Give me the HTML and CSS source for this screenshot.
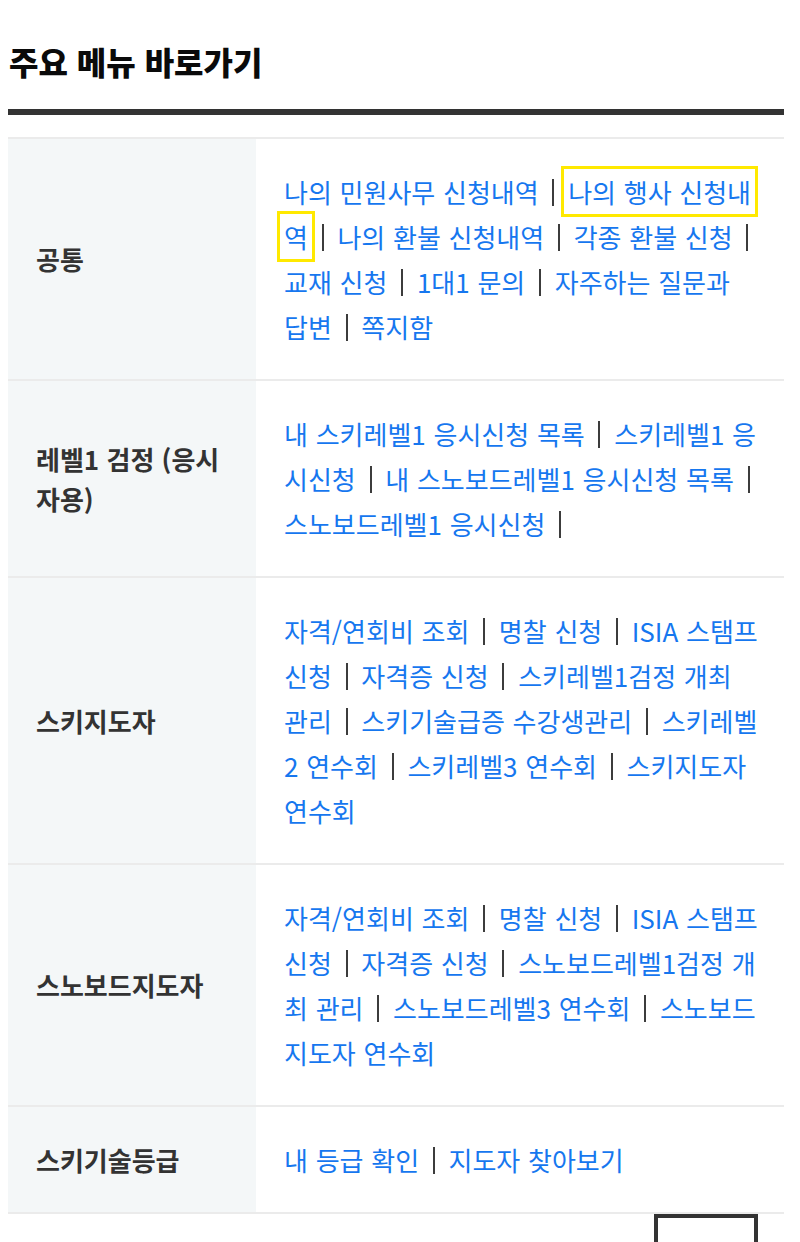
FILE: index.html
```html
<!DOCTYPE html>
<html lang="ko">
<head>
<meta charset="utf-8">
<title>주요 메뉴 바로가기</title>
<link rel="stylesheet" href="styles.css">
</head>
<body>
<div class="wrap">
  <h2 class="title">주요 메뉴 바로가기</h2>
  <div class="rule"></div>
  <div class="menu">
    <div class="row">
      <div class="head">공통</div>
      <div class="links">
        <a href="#">나의 민원사무 신청내역</a>&nbsp;<span class="bar"></span> <a class="focus" href="#">나의 행사 신청내역</a>&nbsp;<span class="bar"></span> <a href="#">나의 환불 신청내역</a>&nbsp;<span class="bar"></span> <a href="#">각종 환불 신청</a>&nbsp;<span class="bar"></span> <a href="#">교재 신청</a>&nbsp;<span class="bar"></span> <a href="#">1대1 문의</a>&nbsp;<span class="bar"></span> <a class="keep" href="#">자주하는 질문과 답변</a>&nbsp;<span class="bar"></span> <a href="#">쪽지함</a>
      </div>
    </div>
    <div class="row">
      <div class="head">레벨1 검정 (응시자용)</div>
      <div class="links">
        <a href="#">내 스키레벨1 응시신청 목록</a>&nbsp;<span class="bar"></span> <a href="#">스키레벨1 응시신청</a>&nbsp;<span class="bar"></span> <a href="#">내 스노보드레벨1 응시신청 목록</a>&nbsp;<span class="bar"></span> <a href="#">스노보드레벨1 응시신청</a>&nbsp;<span class="bar"></span>
      </div>
    </div>
    <div class="row">
      <div class="head">스키지도자</div>
      <div class="links">
        <a href="#">자격/연회비 조회</a>&nbsp;<span class="bar"></span> <a href="#">명찰 신청</a>&nbsp;<span class="bar"></span> <a href="#">ISIA 스탬프 신청</a>&nbsp;<span class="bar"></span> <a href="#">자격증 신청</a>&nbsp;<span class="bar"></span> <a href="#">스키레벨1검정 개최 관리</a>&nbsp;<span class="bar"></span> <a href="#">스키기술급증 수강생관리</a>&nbsp;<span class="bar"></span> <a href="#">스키레벨2 연수회</a>&nbsp;<span class="bar"></span> <a href="#">스키레벨3 연수회</a>&nbsp;<span class="bar"></span> <a href="#">스키지도자 연수회</a>
      </div>
    </div>
    <div class="row">
      <div class="head">스노보드지도자</div>
      <div class="links">
        <a href="#">자격/연회비 조회</a>&nbsp;<span class="bar"></span> <a href="#">명찰 신청</a>&nbsp;<span class="bar"></span> <a href="#">ISIA 스탬프 신청</a>&nbsp;<span class="bar"></span> <a href="#">자격증 신청</a>&nbsp;<span class="bar"></span> <a href="#">스노보드레벨1검정 개최 관리</a>&nbsp;<span class="bar"></span> <a href="#">스노보드레벨3 연수회</a>&nbsp;<span class="bar"></span> <a href="#">스노보드지도자 연수회</a>
      </div>
    </div>
    <div class="row">
      <div class="head">스키기술등급</div>
      <div class="links">
        <a href="#">내 등급 확인</a>&nbsp;<span class="bar"></span> <a href="#">지도자 찾아보기</a>
      </div>
    </div>
  </div>
  <div class="actions">
    <div class="top-btn"></div>
  </div>
</div>
</body>
</html>
```
FILE: styles.css
```css
body {
  margin: 0;
  background: #fff;
  font-family: "Noto Sans CJK KR", "Noto Sans", sans-serif;
}

.wrap {
  margin: 0 16px 0 8px;
}

.title {
  margin: 0;
  padding: 43px 0 30px 1px;
  font-size: 32px;
  line-height: 36px;
  font-weight: 900;
  color: #0a0a0a;
}

.rule {
  height: 6px;
  background: #333;
  margin-bottom: 22px;
}

.menu {
  border-top: 2px solid #ebebeb;
}

.row {
  display: grid;
  grid-template-columns: 248px 1fr;
  border-bottom: 2px solid #ebebeb;
}

.head {
  display: flex;
  align-items: center;
  padding: 0 28px;
  background: #f4f7f8;
  color: #333;
  font-size: 26px;
  font-weight: 700;
  line-height: 40px;
}

.links {
  padding: 30px 24px 30px 28px;
  font-size: 26px;
  line-height: 45px;
  word-spacing: 0.45px;
}

.links a {
  color: #1677ef;
  text-decoration: none;
}

.bar {
  display: inline-block;
  width: 2px;
  height: 27px;
  margin: 0 6px;
  background: #3c3c3c;
  vertical-align: -3px;
}

.focus {
  outline: 3px solid #ffe900;
  outline-offset: 4px;
}

.keep {
  word-break: keep-all;
}

.actions {
  display: flex;
  justify-content: flex-end;
  padding-right: 26px;
}

.top-btn {
  width: 96px;
  height: 80px;
  border: 4px solid #333;
  border-bottom: none;
}
```
